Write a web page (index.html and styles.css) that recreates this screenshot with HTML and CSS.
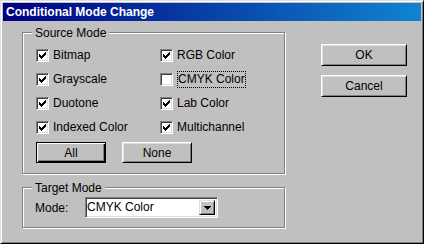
FILE: index.html
```html
<!DOCTYPE html>
<html lang="en">
    <head>
        <meta charset="UTF-8">
        <meta name="viewport" content="width=device-width, initial-scale=1.0">
        <title>Conditional Mode Change</title>
        <link rel="stylesheet" href="styles.css">
    </head>
    <body>
        <div class="window">
            <div class="titlebar">Conditional Mode Change</div>
            <div class="content">
                <div class="groups">
                    <div class="group source">
                        <span class="legend">Source Mode</span>
                        <div class="modes">
                            <label class="check"><span class="box"><svg viewBox="0 0 7 7" width="7" height="7"><path d="M0 2h1v3H0zM1 3h1v3H1zM2 4h1v3H2zM3 3h1v3H3zM4 2h1v3H4zM5 1h1v3H5zM6 0h1v3H6z"/></svg></span>Bitmap</label>
                            <label class="check"><span class="box"><svg viewBox="0 0 7 7" width="7" height="7"><path d="M0 2h1v3H0zM1 3h1v3H1zM2 4h1v3H2zM3 3h1v3H3zM4 2h1v3H4zM5 1h1v3H5zM6 0h1v3H6z"/></svg></span>RGB Color</label>
                            <label class="check"><span class="box"><svg viewBox="0 0 7 7" width="7" height="7"><path d="M0 2h1v3H0zM1 3h1v3H1zM2 4h1v3H2zM3 3h1v3H3zM4 2h1v3H4zM5 1h1v3H5zM6 0h1v3H6z"/></svg></span>Grayscale</label>
                            <label class="check"><span class="box"></span><span class="focus">CMYK Color</span></label>
                            <label class="check"><span class="box"><svg viewBox="0 0 7 7" width="7" height="7"><path d="M0 2h1v3H0zM1 3h1v3H1zM2 4h1v3H2zM3 3h1v3H3zM4 2h1v3H4zM5 1h1v3H5zM6 0h1v3H6z"/></svg></span>Duotone</label>
                            <label class="check"><span class="box"><svg viewBox="0 0 7 7" width="7" height="7"><path d="M0 2h1v3H0zM1 3h1v3H1zM2 4h1v3H2zM3 3h1v3H3zM4 2h1v3H4zM5 1h1v3H5zM6 0h1v3H6z"/></svg></span>Lab Color</label>
                            <label class="check"><span class="box"><svg viewBox="0 0 7 7" width="7" height="7"><path d="M0 2h1v3H0zM1 3h1v3H1zM2 4h1v3H2zM3 3h1v3H3zM4 2h1v3H4zM5 1h1v3H5zM6 0h1v3H6z"/></svg></span>Indexed Color</label>
                            <label class="check"><span class="box"><svg viewBox="0 0 7 7" width="7" height="7"><path d="M0 2h1v3H0zM1 3h1v3H1zM2 4h1v3H2zM3 3h1v3H3zM4 2h1v3H4zM5 1h1v3H5zM6 0h1v3H6z"/></svg></span>Multichannel</label>
                        </div>
                        <div class="row-btns">
                            <button class="btn small default">All</button>
                            <button class="btn small">None</button>
                        </div>
                    </div>
                    <div class="group target">
                        <span class="legend">Target Mode</span>
                        <span class="mode-label">Mode:</span>
                        <div class="select">
                            <span class="value">CMYK Color</span>
                            <span class="drop"><svg viewBox="0 0 7 4" width="7" height="4"><path d="M0 0h7v1H0zM1 1h5v1H1zM2 2h3v1H2zM3 3h1v1H3z"/></svg></span>
                        </div>
                    </div>
                </div>
                <div class="actions">
                    <button class="btn wide">OK</button>
                    <button class="btn wide">Cancel</button>
                </div>
            </div>
        </div>
    </body>
</html>
```

FILE: styles.css
```css
*{
    margin: 0;
    padding: 0;
    box-sizing: border-box;
}
body{
    font-family: "Liberation Sans", Arial, sans-serif;
    font-size: 12px;
    color: #000;
    background: #c0c0c0;
}
.window{
    width: 424px;
    height: 244px;
    padding: 2px;
    background: #c0c0c0;
    border: 1px solid;
    border-color: #dfdfdf #000 #000 #dfdfdf;
    box-shadow: inset 1px 1px #fff, inset -1px -1px #808080;
}
.titlebar{
    height: 18px;
    line-height: 18px;
    padding-left: 3px;
    color: #fff;
    font-weight: bold;
    background: linear-gradient(to right, #000080, #1084d0);
}
.content{
    display: flex;
    padding: 11px 0 0 19px;
}
.groups{
    width: 263px;
}
.group{
    position: relative;
    border: 1px solid #808080;
    box-shadow: inset 1px 1px #fff, 1px 1px #fff;
}
.legend{
    position: absolute;
    left: 9px;
    top: -7px;
    padding: 0 3px;
    line-height: 14px;
    background: #c0c0c0;
}
.source{
    height: 142px;
    padding: 16px 0 0 13px;
}
.modes{
    display: grid;
    grid-template-columns: 124px auto;
    row-gap: 11px;
}
.check{
    display: flex;
    align-items: center;
    height: 13px;
    line-height: 13px;
}
.box{
    display: flex;
    width: 13px;
    height: 13px;
    padding: 2px;
    margin-right: 4px;
    background: #fff;
    border: 1px solid;
    border-color: #808080 #fff #fff #808080;
    box-shadow: inset 1px 1px #404040, inset -1px -1px #dfdfdf;
}
.box svg{
    display: block;
}
.focus{
    line-height: 15px;
    border: 1px dotted #000;
}
.row-btns{
    display: flex;
    gap: 16px;
    margin-top: 8px;
}
.btn{
    font: inherit;
    color: #000;
    background: #c0c0c0;
    border: 1px solid;
    border-color: #fff #000 #000 #fff;
    box-shadow: inset 1px 1px #dfdfdf, inset -1px -1px #808080;
}
.small{
    width: 70px;
    height: 21px;
}
.default{
    border-color: #000;
    box-shadow: inset 1px 1px #fff, inset -1px -1px #000, inset -2px -2px #808080;
}
.target{
    display: flex;
    align-items: center;
    height: 41px;
    margin-top: 13px;
    padding-left: 12px;
}
.mode-label{
    width: 50px;
}
.select{
    display: flex;
    width: 133px;
    height: 21px;
    padding: 2px 2px 2px 1px;
    background: #fff;
    border: 1px solid;
    border-color: #808080 #fff #fff #808080;
    box-shadow: inset 1px 1px #404040, inset -1px -1px #dfdfdf;
}
.value{
    line-height: 15px;
}
.drop{
    display: flex;
    align-items: center;
    justify-content: center;
    width: 16px;
    margin-left: auto;
    background: #c0c0c0;
    border: 1px solid;
    border-color: #dfdfdf #000 #000 #dfdfdf;
    box-shadow: inset 1px 1px #fff, inset -1px -1px #808080;
}
.actions{
    display: flex;
    flex-direction: column;
    gap: 9px;
    margin: 12px 0 0 36px;
}
.wide{
    width: 86px;
    height: 22px;
}
```
